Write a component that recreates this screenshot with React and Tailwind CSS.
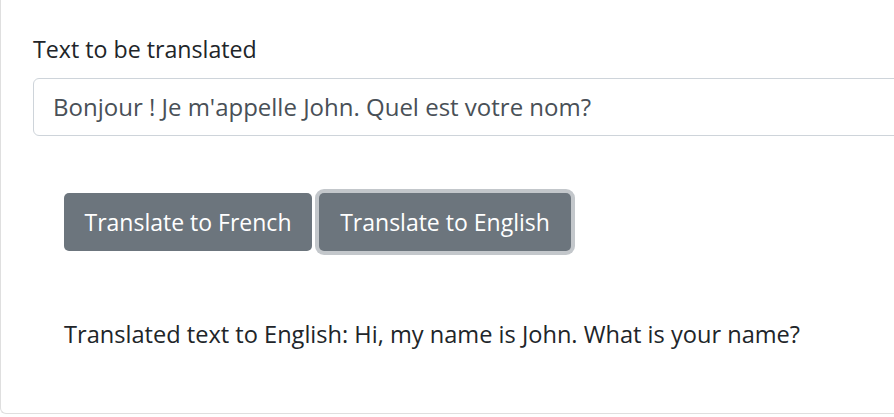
export default function App() {
    return (
        <div className="w-[894px] h-[417px] overflow-hidden bg-white" style={{ fontFamily: '"Segoe UI", "Open Sans", "Noto Sans", sans-serif' }}>
            <div className="w-[1000px] h-[414px] border-l border-b border-[#dfdfdf] rounded-bl-[6px] pl-[32px] pt-[34px]">
                {/* Champ de saisie */}
                <label className="block text-[23.2px] leading-[30px] text-[#212529] mb-[14px]">Text to be translated</label>
                <div className="w-[960px] h-[58px] border border-[#ced4da] rounded-[6px] pl-[19px] flex items-center text-[24px] text-[#495057]">
                    Bonjour ! Je m'appelle John. Quel est votre nom?
                </div>

                <div className="flex gap-[7px] mt-[57px] ml-[31px]">
                    <button className="w-[248px] h-[58px] rounded-[5px] bg-[#6c757d] text-white text-[23px]">
                        Translate to French
                    </button>
                    <button className="w-[252px] h-[58px] rounded-[5px] bg-[#6c757d] text-white text-[23px] ring-4 ring-[#c3c7cb]">
                        Translate to English
                    </button>
                </div>

                <p className="ml-[31px] mt-[68px] text-[23.6px] leading-[30px] text-[#212529]">
                    Translated text to English: Hi, my name is John. What is your name?
                </p>
            </div>
        </div>
    );
}
